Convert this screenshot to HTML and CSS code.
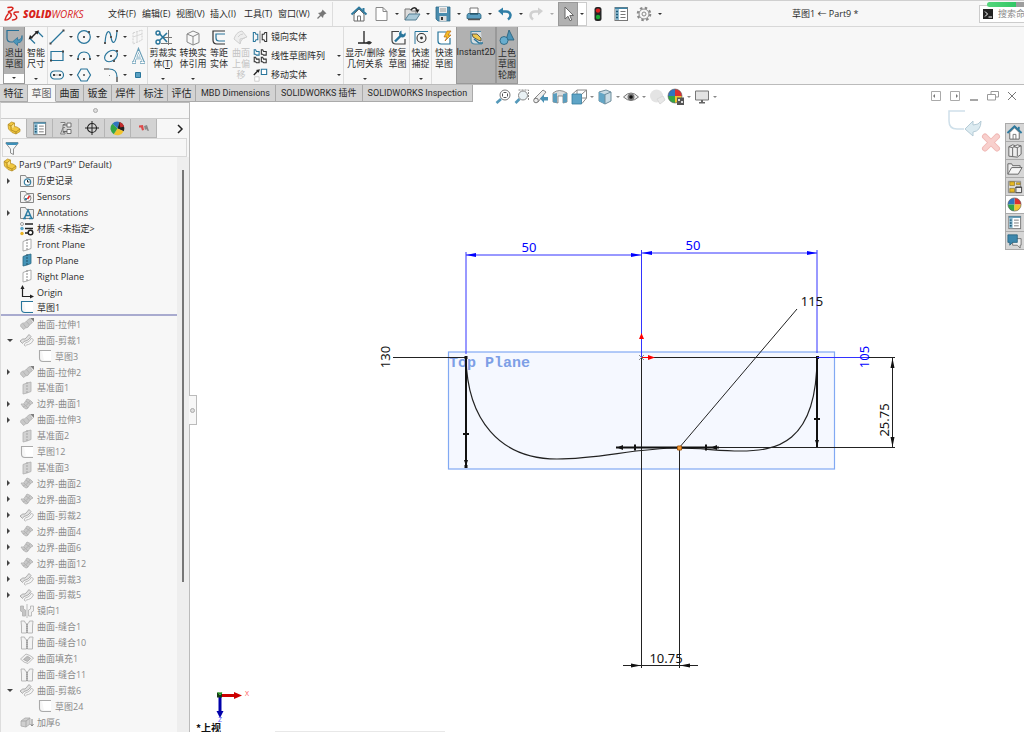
FILE: index.html
```html
<!DOCTYPE html>
<html lang="zh-CN">
<head>
<meta charset="utf-8">
<title>草图1 ← Part9 *</title>
<link rel="stylesheet" href="styles.css">
</head>
<body>
<svg class="sprite" aria-hidden="true">
  <symbol id="home" viewBox="0 0 18 18"><path d="M4 9v7h10V9L9 4z" fill="#fff" stroke="#666"/><path d="M7.500 16v-5h3v5" fill="none" stroke="#777"/><path d="M1.500 9.500 9 2.500l7.500 7" fill="none" stroke="#2f7a9e" stroke-width="2"/><path d="M13.500 3v3" stroke="#2f7a9e" stroke-width="2"/></symbol>
  <symbol id="new" viewBox="0 0 18 18"><path d="M4 2.500h7l4 4v9H4z" fill="#fff" stroke="#888"/><path d="M11 2.500v4h4" fill="none" stroke="#888"/></symbol>
  <symbol id="open" viewBox="0 0 18 18"><path d="M2 15V4h5l1.500 2H13v3" fill="#ddd" stroke="#777"/><path d="M2 15l4-6h11l-4 6z" fill="#a9c9d8" stroke="#557f93"/><path d="M8 5c2-3 5-3 6 0" fill="none" stroke="#222" stroke-width="1.500"/><path d="M12 4.500h4.500L14.500 8z" fill="#222"/></symbol>
  <symbol id="save" viewBox="0 0 18 18"><path d="M2 2h14v14H4l-2-2z" fill="#4a8cae" stroke="#2f6a88" stroke-width=".8"/><path d="M5 2h8v6H5z" fill="#eee"/><path d="M6 4h6M6 6h6" stroke="#999"/><path d="M5.500 11h7v5h-7z" fill="#ddd"/><path d="M7 12h2v3H7z" fill="#333"/></symbol>
  <symbol id="print" viewBox="0 0 18 18"><path d="M5 3h8v6H5z" fill="#fff" stroke="#777"/><path d="M3 8.500h12l1 1.500v3.500H2V10z" fill="#5b9ec1" stroke="#2c647f" stroke-width=".8"/><path d="M3 14.500h12" stroke="#555" stroke-width="1.500"/><path d="M5 9h8" stroke="#123a4d"/></symbol>
  <symbol id="undo" viewBox="0 0 18 18"><path d="M5 6.500h5c5 0 6 5 2 8" fill="none" stroke="currentColor" stroke-width="2.500"/><path d="M7 2.500v8L2 6z" fill="currentColor"/></symbol>
  <symbol id="cursor" viewBox="0 0 18 18"><path d="M6 2v12l3-2.700 2 4.500 1.800-.8-2-4.500h3.700z" fill="#fff" stroke="#666"/></symbol>
  <symbol id="traffic" viewBox="0 0 18 18"><rect x="5.500" y="2" width="7" height="14" rx="2.500" fill="#262626"/><circle cx="9" cy="5.600" r="2.200" fill="#df2121"/><circle cx="9" cy="12" r="2.200" fill="#1bac35"/></symbol>
  <symbol id="list" viewBox="0 0 18 18"><rect x="3" y="2.500" width="12.500" height="13" fill="#fff" stroke="#777"/><path d="M3 2.500h12.500V4H3z" fill="#3f86a8"/><path d="M3.500 4H7v11H3.500z" fill="#8dbbd0"/><path d="M4 6.500h2M4 9.500h2M4 12.500h2" stroke="#1d5a7a" stroke-width="1.500"/><path d="M8.500 6.500h5M8.500 9.500h5M8.500 12.500h5" stroke="#777"/></symbol>
  <symbol id="gear" viewBox="0 0 18 18"><circle cx="9" cy="9" r="6.300" fill="none" stroke="#888" stroke-width="2" stroke-dasharray="2.500 2.450"/><circle cx="9" cy="9" r="5" fill="#f7f7f7" stroke="#888"/><circle cx="9" cy="9" r="2" fill="none" stroke="#888"/></symbol>
  <symbol id="pin" viewBox="0 0 12 12"><path d="M6.500 1.500 10.500 5.500 9 6 7.500 7.500 7 10 2 5l2.500-.5L6 3z" fill="#777"/><path d="M1.500 10.500 5 7" stroke="#777" stroke-width="1.200"/></symbol>

  <symbol id="exit" viewBox="0 0 18 18"><path d="M14 1.500H2V9q0 4 4 4h2" fill="none" stroke="#276f96" stroke-width="1.200"/><path d="M8 12.500l4.500-4v2.500q4 0 4.500-4.500 1.500 7-4.500 7.500v2.500z" fill="#4d96ba" stroke="#276f96" stroke-width=".7"/></symbol>
  <symbol id="smartdim" viewBox="0 0 18 18"><path d="M11 3l5 5M3 9.500l5 5" fill="none" stroke="#28759b" stroke-width="1.200"/><path d="M4 9 10 3" stroke="#222" stroke-width="1.500"/><path d="M1.500 10.500 3 6 6 9zM12 1.500 7.500 2.500 10.500 5.500z" fill="#222"/></symbol>
  <symbol id="line" viewBox="0 0 18 18"><path d="M3 15 15 3" stroke="#28759b" stroke-width="1.200"/><path d="M1.500 14.500h2v2h-2zM14.500 1.500h2v2h-2z" fill="#444"/></symbol>
  <symbol id="circle" viewBox="0 0 18 18"><circle cx="9" cy="9" r="6.300" fill="none" stroke="#28759b" stroke-width="1.200"/><path d="M8 8h2v2H8zM13 3h2v2h-2z" fill="#555"/></symbol>
  <symbol id="spline" viewBox="0 0 18 18"><path d="M3 15C4 1 8 1 9 9s5 8 6-6" fill="none" stroke="#28759b" stroke-width="1.200"/><path d="M2 14h2v2H2zM8 8h2v2H8zM14 2h2v2h-2z" fill="#555"/></symbol>
  <symbol id="ghostplane" viewBox="0 0 18 18"><path d="M4 5l9-3v10l-9 4z" fill="none" stroke="#d0d0d0" stroke-dasharray="2 1"/><path d="M8 3v12M4 9l9-3" stroke="#d8d8d8"/></symbol>
  <symbol id="rect" viewBox="0 0 18 18"><path d="M3 4.500h12v9H3z" fill="none" stroke="#28759b" stroke-width="1.200"/><path d="M2 12.500h2v2H2zM14 3.500h2v2h-2z" fill="#444"/></symbol>
  <symbol id="arc" viewBox="0 0 18 18"><path d="M3 12q0-7 6-7t6 7" fill="none" stroke="#28759b" stroke-width="1.200"/><path d="M2 11h2v2H2zM14 11h2v2h-2zM8 11h2v2H8z" fill="#555"/></symbol>
  <symbol id="ellipse" viewBox="0 0 18 18"><ellipse cx="9" cy="9" rx="7" ry="5" transform="rotate(-35 9 9)" fill="none" stroke="#28759b" stroke-width="1.200"/><path d="M8 8h2v2H8zM14 3h2v2h-2zM11 13h2v2h-2z" fill="#555"/></symbol>
  <symbol id="texticon" viewBox="0 0 18 18"><path d="M3 15.500h4M11 15.500h5M5 15 9.500 3l5 12M6.500 11h6" fill="none" stroke="#6b9fb8" stroke-width="2.400"/><path d="M3.500 15.500h3M11.500 15.500h4M5 15 9.500 4l4.500 11M6.500 11h6" fill="none" stroke="#fff"/></symbol>
  <symbol id="slot" viewBox="0 0 18 18"><rect x="2.500" y="5" width="13" height="8" rx="4" fill="none" stroke="#28759b" stroke-width="1.200"/><path d="M5 8h2v2H5zM11 8h2v2h-2z" fill="#444"/><path d="M7 9h4" stroke="#aaa"/></symbol>
  <symbol id="hexagon" viewBox="0 0 18 18"><path d="M2.500 9 6 3h6l3.500 6L12 15H6z" fill="none" stroke="#28759b" stroke-width="1.200"/><path d="M8 8h2v2H8z" fill="#777"/></symbol>
  <symbol id="fillet" viewBox="0 0 18 18"><path d="M7 3q8 0 8 8" fill="none" stroke="#28759b" stroke-width="1.200"/><path d="M2 3h5M15 11v5" stroke="#333" stroke-width="1.200"/><path d="M7 9h1v1H7z" fill="#888"/></symbol>
  <symbol id="point" viewBox="0 0 18 18"><path d="M6.500 6.500h5v5h-5z" fill="#5aa0c2" stroke="#28759b"/></symbol>
  <symbol id="trim" viewBox="0 0 18 18"><path d="M14.500 1v15M9 8.500h9M7 14.500h11" stroke="#777"/><path d="M5 4l8 9M5 12l8-8" stroke="#28759b" stroke-width="1.600"/><circle cx="4" cy="4" r="2" fill="none" stroke="#28759b" stroke-width="1.400"/><circle cx="4" cy="13" r="2" fill="none" stroke="#28759b" stroke-width="1.400"/></symbol>
  <symbol id="convert" viewBox="0 0 18 18"><path d="M3 5l6-3 6 2.500v9L9 16l-6-3z" fill="#f8f8f8" stroke="#888"/><path d="M3 5l6 2.500 6-3M9 7.500V16" fill="none" stroke="#888"/></symbol>
  <symbol id="offset" viewBox="0 0 18 18"><path d="M15 2H3v9q0 4 4 4h8" fill="none" stroke="#333" stroke-width="1.200"/><path d="M15 5H6v4q0 3 3 3h6" fill="none" stroke="#28759b" stroke-width="1.200"/></symbol>
  <symbol id="surfoffset" viewBox="0 0 18 18"><path d="M2 10q2-7 8-8l5 6q-6 1-7 7z" fill="#eee" stroke="#d0d0d0"/><path d="M6 8q2-3 5-3M8 15v-5l5-1" fill="none" stroke="#d0d0d0"/></symbol>
  <symbol id="mirror" viewBox="0 0 18 18"><path d="M9 2v14" stroke="#777"/><path d="M1.500 4h2l1 2h2v6h-2l-1 2h-2z" fill="none" stroke="#28759b" stroke-width="1.200"/><path d="M16.500 4h-2l-1 2h-2v6h2l1 2h2z" fill="none" stroke="#333" stroke-width="1.200"/></symbol>
  <symbol id="pattern" viewBox="0 0 18 18"><g fill="none" stroke="#333" stroke-width="1.200"><path d="M10.500 2h1.500l1 2h3v4h-3l-1-1h-1.500zM2.500 10.500H4l1 2h3v4H5l-1-1H2.500zM10.500 10.500H12l1 2h3v4h-3l-1-1h-1.500z"/></g><path d="M2.500 2H4l1 2h3v4H5L4 7H2.500z" fill="none" stroke="#28759b" stroke-width="1.200"/></symbol>
  <symbol id="move" viewBox="0 0 18 18"><path d="M10.500 2.500h6v6h-6z" fill="#fff" stroke="#28759b" stroke-width="1.200"/><path d="M3 11h5v5H3z" fill="#fff" stroke="#ccc"/><path d="M2 9 7 4" stroke="#222" stroke-width="1.500"/><path d="M9 2.500 4.500 3.500 7.500 6.500z" fill="#222"/></symbol>
  <symbol id="relations" viewBox="0 0 18 18"><path d="M8 2v12M2 14h10" stroke="#222" stroke-width="1.300"/><path d="M10 13.500q3-3 6 0-3 4-6 0" fill="#333"/></symbol>
  <symbol id="repair" viewBox="0 0 18 18"><path d="M10 2.500H3V11q0 4 4 4h9V10" fill="none" stroke="#444" stroke-width="1.200"/><path d="M6 12.500l6-6" stroke="#28759b" stroke-width="2.400"/><path d="M12.500 1.500v3l2 1 2-2q1 4-2.500 5-4 0-4-4 .5-2.500 2.500-3z" fill="#28759b"/></symbol>
  <symbol id="snap" viewBox="0 0 18 18"><path d="M16 2.500H3V15" fill="none" stroke="#28759b"/><circle cx="9.500" cy="9" r="4.500" fill="none" stroke="#333" stroke-width="1.100"/><circle cx="9.500" cy="9" r="1.400" fill="#333"/></symbol>
  <symbol id="rapid" viewBox="0 0 18 18"><path d="M11 3H3v9q0 3 3 3h9V9" fill="#fff" stroke="#28759b" stroke-width="1.200"/><path d="M16 2h-4L9 8h3l-2 4 6-6h-3z" fill="#f6bd26" stroke="#b26818" stroke-width=".7"/></symbol>
  <symbol id="instant" viewBox="0 0 18 18"><path d="M14 2.500H4V11q0 4 4 4h7" fill="#d5dcdf" stroke="#4c8aa8" stroke-width="1.200"/><path d="M5 5h5l4 4v3l-3-1-5-3z" fill="#edc84f" stroke="#444" stroke-width=".8"/><path d="M7 10l5 4h4" stroke="#28759b" stroke-width="1.500" fill="none"/></symbol>
  <symbol id="shaded" viewBox="0 0 18 18"><path d="M11 1l5 10H8z" fill="#4c94b7" stroke="#235d79" stroke-width=".8"/><circle cx="6" cy="11.500" r="4" fill="#68adce" stroke="#235d79" stroke-width=".8"/></symbol>

  <symbol id="zoomfit" viewBox="0 0 18 18"><circle cx="11" cy="7" r="5" fill="#fff" stroke="#777"/><path d="M2.500 15 7 11" stroke="#5498b9" stroke-width="2.600"/><path d="M9.500 4.500h3M9.500 9.500h3M8.500 5.500v3M13.500 5.500v3" stroke="#555"/></symbol>
  <symbol id="zoomarea" viewBox="0 0 18 18"><path d="M5.500 2h10v10" fill="none" stroke="#888" stroke-dasharray="2 1"/><circle cx="10" cy="7.500" r="4.500" fill="#eaf2f5" stroke="#888"/><path d="M2.500 15 6.500 11" stroke="#5498b9" stroke-width="2.600"/></symbol>
  <symbol id="prevview" viewBox="0 0 18 18"><path d="M2 11 11 2l3 2-8 10z" fill="#eee" stroke="#888"/><path d="M8 10.500l4-4V9h4v3.500h-4V15z" fill="#4b92b5"/><circle cx="4" cy="12.500" r="2.300" fill="#eee" stroke="#777"/></symbol>
  <symbol id="section" viewBox="0 0 18 18"><path d="M2 5q6-5 14 0v9l-4 1V8H7v7l-5-1z" fill="#ddd" stroke="#777" stroke-width=".8"/><path d="M2 6l4-1v10l-4-1zM12 6l4-1v9l-4 1z" fill="#5b9dbd"/></symbol>
  <symbol id="orient" viewBox="0 0 18 18"><path d="M2.500 6 7 2h9.500v8L12 15.500M12 6l4.500-4M7 2v4M12 10h4.500" fill="#fff" stroke="#888"/><path d="M2 6h9.500v10H2z" fill="#5ea4c6" stroke="#367b9d" stroke-width=".8"/></symbol>
  <symbol id="display" viewBox="0 0 18 18"><path d="M3 4l7-2 5 2v9l-6 3-6-3z" fill="#c8dbe4" stroke="#6f8e9d"/><path d="M3 4l6 2.500V16l-6-3z" fill="#63a6c6"/><path d="M9 6.500 15 4M9 6v10" fill="none" stroke="#6f8e9d"/></symbol>
  <symbol id="eye" viewBox="0 0 18 18"><path d="M1.500 9q7.500-8 15 0-7.500 7-15 0z" fill="#eee" stroke="#777"/><circle cx="9" cy="9" r="3.500" fill="#777"/><circle cx="9" cy="9" r="1.800" fill="#111"/></symbol>
  <symbol id="ghostball" viewBox="0 0 18 18"><circle cx="8.500" cy="8" r="6.500" fill="#e4e4e4"/><path d="M9 11l6-3 2 4-5 4z" fill="#e8e8e8" stroke="#d8d8d8"/></symbol>
  <symbol id="ball" viewBox="0 0 18 18"><path d="M9 9V2A7 7 0 0 1 16 9z" fill="#da3030"/><path d="M9 9V2A7 7 0 0 0 2 9z" fill="#2f75c0"/><path d="M9 9H2A7 7 0 0 0 9 16z" fill="#33a546"/><path d="M9 9h7A7 7 0 0 1 9 16z" fill="#f0c32d"/><circle cx="9" cy="9" r="7" fill="none" stroke="#555" stroke-width=".6"/></symbol>
  <symbol id="darkball" viewBox="0 0 18 18"><path d="M9 9 3.500 4A7.300 7.300 0 0 1 11 2z" fill="#2f75c0"/><path d="M9 9 11 2a7.200 7.200 0 0 1 4.500 10z" fill="#222"/><path d="M11 2q4 1 5 5l-4 1z" fill="#c62c2c"/><path d="M9 9l6.500 3A7.200 7.200 0 0 1 5 15z" fill="#f0c32d"/><path d="M9 9l-4 6A7.200 7.200 0 0 1 3.500 4z" fill="#33a546"/></symbol>
  <symbol id="scene" viewBox="0 0 18 18"><use href="#ball" x="-1" y="-1" width="18" height="18"/><path d="M10 9.500h7V17h-7z" fill="#555"/><path d="M11 11h2v2h-2zM14 13h2v2h-2z" fill="#ddd"/></symbol>
  <symbol id="monitor" viewBox="0 0 18 18"><path d="M2.500 3h13v9h-13z" fill="#e3e3e3" stroke="#777"/><path d="M8 12h2v2.500H8zM6 14h6v1.500H6z" fill="#666"/></symbol>

  <symbol id="part" viewBox="0 0 14 14"><path d="M1 3.500 4.500 1l3 1v3.500L10 6l3 2v2.500L9 13l-4-1.500L1.500 8z" fill="#f2c83f" stroke="#b38a20" stroke-width=".7"/><path d="M1 3.500 4 5l3.500-3M4 5v4l5 2 4-3M9 11v2" fill="none" stroke="#a17b1b" stroke-width=".7"/><path d="M4.500 5 7 3v3L5.500 7.500z" fill="#f9e28b"/></symbol>
  <symbol id="config" viewBox="0 0 14 14"><path d="M1.500 1.500H6v2H4v3h2M4 6.500v5h2v1.500H1.500z" fill="#e5e5e5" stroke="#777" stroke-width=".9"/><path d="M8 2h4v4H8zM8 8.500h4v4H8z" fill="#f4f4f4" stroke="#666" stroke-width=".9"/><path d="M4 4h4M4 10.500h4" stroke="#666"/></symbol>
  <symbol id="target" viewBox="0 0 14 14"><circle cx="7" cy="7" r="4.500" fill="none" stroke="#222" stroke-width="1.100"/><path d="M7 0v14M0 7h14" stroke="#222"/></symbol>
  <symbol id="cam" viewBox="0 0 14 14"><path d="M2 4.500 6 4l1 5-2 .5-1-3H2z" fill="#dd4a4a"/><path d="M7 5l3-1 2 6-2-.5-.5-1.500L8 9z" fill="#888"/></symbol>
  <symbol id="filter" viewBox="0 0 14 14"><path d="M1 1.500h12v1L8.500 8v5.500l-3-1.500V8L1 2.500z" fill="#f4f7f8" stroke="#777" stroke-width=".8"/><path d="M1 1.500h12v1L11.500 4h-9L1 2.500z" fill="#3c8fb8"/></symbol>
  <symbol id="history" viewBox="0 0 14 14"><path d="M.5 12.500v-11h5l1 2h7v9z" fill="#f2f2f2" stroke="#888"/><circle cx="7.500" cy="8" r="3.200" fill="#fff" stroke="#3a81a3" stroke-width="1.200"/><path d="M7.500 6v2h2" fill="none" stroke="#222"/></symbol>
  <symbol id="sensor" viewBox="0 0 14 14"><path d="M.5 12.500v-11h5l1 2h7v9z" fill="#f2f2f2" stroke="#888"/><circle cx="7.500" cy="8" r="3.500" fill="#fff" stroke="#888"/><path d="M7.500 9l2-3" stroke="#d22" stroke-width="1.500"/><path d="M5 8h2v2H5z" fill="#3a81a3"/></symbol>
  <symbol id="annot" viewBox="0 0 14 14"><path d="M.5 12.500v-11h5l1 2h7v9z" fill="#eee" stroke="#888"/><path d="M3 12.500h3M9 12.500h4M4.500 12 8 4l3.500 8M6 9.500h4" fill="none" stroke="#2b7ba1" stroke-width="1.500"/></symbol>
  <symbol id="material" viewBox="0 0 14 14"><circle cx="2" cy="2" r="1.500" fill="#fff" stroke="#777" stroke-width=".7"/><circle cx="2" cy="6.500" r="1.700" fill="#58a4c7"/><circle cx="2" cy="11.500" r="1.700" fill="#e9b321"/><path d="M5 2h8M5 6.500h8M5 11h3" stroke="#222" stroke-width="1.300"/><circle cx="10.500" cy="10.500" r="2.300" fill="#fff" stroke="#222" stroke-width="1.500"/></symbol>
  <symbol id="plane" viewBox="0 0 14 14"><path d="M3 3.500l4-1.500 4-1v9.500L7 12l-4 1z" fill="#fff" stroke="#999" stroke-width=".8"/><path d="M7 1v12" stroke="#888" stroke-dasharray="2 1"/></symbol>
  <symbol id="planeblue" viewBox="0 0 14 14"><path d="M3 3.500l4-1.500 4-1v9.500L7 12l-4 1z" fill="#4594b8" stroke="#2a6783" stroke-width=".8"/><path d="M7 1v12" stroke="#225269" stroke-dasharray="2 1"/></symbol>
  <symbol id="planegray" viewBox="0 0 14 14"><path d="M3 3.500l4-1.500 4-1v9.500L7 12l-4 1z" fill="#d2d2d2" stroke="#b0b0b0" stroke-width=".8"/><path d="M7 1v12" stroke="#a5a5a5" stroke-dasharray="2 1"/></symbol>
  <symbol id="origin" viewBox="0 0 14 14"><path d="M2.500 2v9.500H12" fill="none" stroke="#222" stroke-width="1.200"/><path d="M.5 4l2-4 2 4zM10 9.500l4 2-4 2z" fill="#222"/></symbol>
  <symbol id="sketch" viewBox="0 0 14 14"><path d="M4 2h9v9H6z" fill="#fff"/><path d="M13 1.500H1.500V9q0 3.500 3.500 3.500h8" fill="none" stroke="currentColor" stroke-width="1.100"/></symbol>
  <symbol id="extrude" viewBox="0 0 14 14"><path d="M0 8.500l2.500-2.500q2 1 4-2l3-2.500 3 4-3 2.500q-1 3-4 3l-2 1.500z" fill="#c9c9c9" stroke="#b0b0b0" stroke-width=".8"/><path d="M3 6.500l3 4M6.500 4.500l3 3.500" stroke="#b5b5b5"/><path d="M10 1h4v4z" fill="#808080"/></symbol>
  <symbol id="cut" viewBox="0 0 14 14"><path d="M0 8q3-3 5-2 2-2 4-4.500l2 2Q9 7 7 7.500 3 8 2.500 10.500z" fill="#e0e0e0" stroke="#a5a5a5" stroke-width=".9"/><path d="M4 12q1-3 4-3 2-1 3.500-4L13.500 7q-2 4-5 4.500-2 0-3 1.500z" fill="#f5f5f5" stroke="#b5b5b5" stroke-width=".9"/></symbol>
  <symbol id="boundary" viewBox="0 0 14 14"><path d="M1 7q3 1 4-2l2-3q4 1 6 4-3 1-4 3.500-1 2.500-3 2.500-3-1-5-5z" fill="#c9c9c9" stroke="#b0b0b0" stroke-width=".8"/><path d="M4 7l4 4M6 4l5 4M3 10q4-1 7-6" fill="none" stroke="#b3b3b3"/></symbol>
  <symbol id="mirrorgray" viewBox="0 0 14 14"><path d="M.5 2h3v3l2 1v6h-3V8l-2-1z" fill="#c5c5c5" stroke="#b0b0b0" stroke-width=".8"/><path d="M13.500 2h-3v3l-2 1v6h3V8l2-1z" fill="#f0f0f0" stroke="#b0b0b0" stroke-width=".8"/><path d="M7 0v14" stroke="#bbb"/></symbol>
  <symbol id="knit" viewBox="0 0 14 14"><path d="M1 1h3.500q0 2 2 2.500V13H1.500V6zM13 1H9.500q0 2-2 2.500V13h5V6z" fill="#f3f3f3" stroke="#b0b0b0" stroke-width=".9"/><path d="M7 4v9" stroke="#999" stroke-width="1.500" stroke-dasharray="1 1"/></symbol>
  <symbol id="fill" viewBox="0 0 14 14"><path d="M.5 7 6 2q4 1 7.500 4L8 11.500Q4 11 .5 7z" fill="#f0f0f0" stroke="#b5b5b5" stroke-width=".9"/><path d="M3.500 7.500 7 4.500q2 0 3.500 2l-3 3q-2-1-4-2z" fill="#bdbdbd" stroke="#a5a5a5" stroke-width=".8"/></symbol>
  <symbol id="thicken" viewBox="0 0 14 14"><path d="M1 6l4-3h5v6l-4 3-5-1z" fill="#d0d0d0" stroke="#b0b0b0" stroke-width=".9"/><path d="M1 6h5v6M6 6l4-3" fill="none" stroke="#aaa"/><path d="M12 4v7M10.500 9l1.500 2 1.500-2" fill="none" stroke="#888"/></symbol>

  <symbol id="books" viewBox="0 0 18 18"><path d="M3 5l4-2 3 1 2-1 4 1v9l-4 3-9-1z" fill="#eee" stroke="#666"/><path d="M3 5l4 1v9M7 6l3-2M8 5l4 1v9M12 6l4-2" fill="none" stroke="#666"/></symbol>
  <symbol id="folder" viewBox="0 0 18 18"><path d="M2 15V4h4l1 2h8v2" fill="#eee" stroke="#666"/><path d="M2 15l4-7h11l-4 7z" fill="#f5f5f5" stroke="#666"/></symbol>
  <symbol id="palette" viewBox="0 0 18 18"><path d="M2.500 3.500h13v12h-13z" fill="#ddd" stroke="#888"/><path d="M4 4h5v4H4zM11 5h4v2h-4zM4 11h5v4H4z" fill="#e6b923" stroke="#7a611a" stroke-width=".6"/><path d="M10.500 9.500h6v6h-6z" fill="#eee" stroke="#444"/><path d="M10 10h6" stroke="#444"/></symbol>
  <symbol id="forum" viewBox="0 0 18 18"><path d="M7 7h9v7h-1v3l-3-3H7z" fill="#eee" stroke="#777"/><path d="M2 3h10v8H7l-3 3v-3H2z" fill="#3c87ad" stroke="#255f7c" stroke-width=".8"/></symbol>
  <symbol id="paneleft" viewBox="0 0 12 12"><path d="M1.500 1.500h9v9h-9z" fill="none" stroke="#aaa"/><path d="M5 4v4L3 6z" fill="#777"/></symbol>
  <symbol id="paneright" viewBox="0 0 12 12"><path d="M1.500 1.500h9v9h-9z" fill="none" stroke="#aaa"/><path d="M7 4v4l2-2z" fill="#777"/></symbol>
  <symbol id="minimize" viewBox="0 0 12 12"><path d="M2 10h8" stroke="#888" stroke-width="1.500"/></symbol>
  <symbol id="restore" viewBox="0 0 12 12"><path d="M4 4V1.500h7.500V7H8.500M.5 4.500h8V10h-8z" fill="none" stroke="#999"/></symbol>
  <symbol id="close" viewBox="0 0 12 12"><path d="M2 2l8 8M10 2l-8 8" stroke="#777"/></symbol>
</svg>

<header class="titlebar">
  <div class="brand">
    <svg class="ds" viewBox="0 0 16 16" role="img" aria-label="Dassault Systèmes"><g fill="none" stroke="#d8231c" stroke-width="1.500" stroke-linecap="round" stroke-linejoin="round"><path d="M4 1.500q5-1 5 1Q8 5 4.500 5.500"/><path d="M4.500 6.500Q8 7 7 10.500 5 14 1 14q1-4 3-6"/><path d="M14.500 6q-5-.5-4.500 2 3.500 2.500 2.500 4.500Q11 14 8.500 14"/></g></svg>
    <span class="wordmark"><b>SOLID</b>WORKS</span>
  </div>
  <nav class="menus">
    <button>文件(F)</button><button>编辑(E)</button><button>视图(V)</button><button>插入(I)</button><button>工具(T)</button><button>窗口(W)</button>
  </nav>
  <button class="pin" aria-label="固定"><svg><use href="#pin"/></svg></button>
  <div class="quick">
    <button class="ic home" aria-label="主页"><svg><use href="#home"/></svg></button>
    <button class="ic" aria-label="新建"><svg><use href="#new"/></svg></button><button class="dd" aria-label="更多"></button>
    <button class="ic" aria-label="打开"><svg><use href="#open"/></svg></button><button class="dd" aria-label="更多"></button>
    <button class="ic" aria-label="保存"><svg><use href="#save"/></svg></button><button class="dd" aria-label="更多"></button>
    <button class="ic" aria-label="打印"><svg><use href="#print"/></svg></button><button class="dd" aria-label="更多"></button>
    <button class="ic undo" aria-label="撤销"><svg><use href="#undo"/></svg></button><button class="dd" aria-label="更多"></button>
    <button class="ic redo" aria-label="重做"><svg><use href="#undo"/></svg></button><button class="dd faint" aria-label="更多"></button>
    <button class="ic pick" aria-label="选择"><svg><use href="#cursor"/></svg></button><button class="dd boxed" aria-label="更多"></button>
    <button class="ic light" aria-label="重建"><svg><use href="#traffic"/></svg></button>
    <button class="ic props" aria-label="属性"><svg><use href="#list"/></svg></button>
    <button class="ic" aria-label="选项"><svg><use href="#gear"/></svg></button><button class="dd" aria-label="更多"></button>
  </div>
  <span class="doctitle">草图1 ← Part9 *</span>
  <label class="search"><svg viewBox="0 0 10 10"><path d="M0 0h10v10H0z" fill="#222"/><path d="M2 2.500 4.500 5 2 7.500M5.500 8H9" fill="none" stroke="#fff"/></svg><input type="text" placeholder="搜索命令" aria-label="搜索命令"></label>
  <span class="meter"></span>
</header>

<section class="ribbon">
  <button class="rb w22 on split first"><svg><use href="#exit"/></svg><span>退出<br>草图</span><i class="tri"></i></button>
  <button class="rb w22"><svg><use href="#smartdim"/></svg><span>智能<br>尺寸</span><i class="tri"></i></button>
  <div class="tools">
    <button aria-label="直线"><svg><use href="#line"/></svg></button><button class="dd" aria-label="更多"></button><button aria-label="圆"><svg><use href="#circle"/></svg></button><button class="dd" aria-label="更多"></button><button aria-label="样条曲线"><svg><use href="#spline"/></svg></button><button class="dd" aria-label="更多"></button><button aria-label="基准面"><svg><use href="#ghostplane"/></svg></button>
    <button aria-label="矩形"><svg><use href="#rect"/></svg></button><button class="dd" aria-label="更多"></button><button aria-label="圆弧"><svg><use href="#arc"/></svg></button><button class="dd" aria-label="更多"></button><button aria-label="椭圆"><svg><use href="#ellipse"/></svg></button><button class="dd" aria-label="更多"></button><button aria-label="文字"><svg><use href="#texticon"/></svg></button>
    <button aria-label="槽口"><svg><use href="#slot"/></svg></button><button class="dd" aria-label="更多"></button><button aria-label="多边形"><svg><use href="#hexagon"/></svg></button><span></span><button aria-label="圆角"><svg><use href="#fillet"/></svg></button><button class="dd" aria-label="更多"></button><button aria-label="点"><svg><use href="#point"/></svg></button>
  </div>
  <button class="rb w30"><svg><use href="#trim"/></svg><span>剪裁实<br>体(<u>T</u>)</span><i class="tri"></i></button>
  <button class="rb w30"><svg><use href="#convert"/></svg><span>转换实<br>体引用</span><i class="tri"></i></button>
  <button class="rb w22"><svg><use href="#offset"/></svg><span>等距<br>实体</span></button>
  <button class="rb w22" disabled><svg><use href="#surfoffset"/></svg><span>曲面<br>上偏<br>移</span></button>
  <div class="rows">
    <button><svg><use href="#mirror"/></svg>镜向实体</button><span></span>
    <button><svg><use href="#pattern"/></svg>线性草图阵列</button><button class="dd" aria-label="更多"></button>
    <button><svg><use href="#move"/></svg>移动实体</button><button class="dd" aria-label="更多"></button>
  </div>
  <button class="rb w42"><svg><use href="#relations"/></svg><span>显示/删除<br>几何关系</span><i class="tri"></i></button>
  <button class="rb w23 sep"><svg><use href="#repair"/></svg><span>修复<br>草图</span></button>
  <button class="rb w22 sep"><svg><use href="#snap"/></svg><span>快速<br>捕捉</span><i class="tri"></i></button>
  <button class="rb w23"><svg><use href="#rapid"/></svg><span>快速<br>草图</span></button>
  <button class="rb w40 on latin"><svg><use href="#instant"/></svg><span>Instant2D</span></button>
  <button class="rb w22 on"><svg><use href="#shaded"/></svg><span>上色<br>草图<br>轮廓</span></button>
</section>

<div class="tabrow">
  <nav class="tabs">
    <button>特征</button><button class="active">草图</button><button>曲面</button><button>钣金</button><button>焊件</button><button>标注</button><button>评估</button><button>MBD Dimensions</button><button>SOLIDWORKS 插件</button><button>SOLIDWORKS Inspection</button>
  </nav>
  <div class="view">
    <button class="ic" aria-label="整屏显示"><svg><use href="#zoomfit"/></svg></button>
    <button class="ic" aria-label="局部放大"><svg><use href="#zoomarea"/></svg></button>
    <button class="ic" aria-label="上一视图"><svg><use href="#prevview"/></svg></button>
    <button class="ic" aria-label="剖面视图"><svg><use href="#section"/></svg></button>
    <button class="ic" aria-label="视图定向"><svg><use href="#orient"/></svg></button><button class="dd" aria-label="更多"></button>
    <button class="ic" aria-label="显示样式"><svg><use href="#display"/></svg></button><button class="dd" aria-label="更多"></button>
    <button class="ic" aria-label="隐藏/显示"><svg><use href="#eye"/></svg></button><button class="dd" aria-label="更多"></button>
    <button class="ic" aria-label="编辑外观"><svg><use href="#ghostball"/></svg></button>
    <button class="ic" aria-label="应用布景"><svg><use href="#scene"/></svg></button><button class="dd" aria-label="更多"></button>
    <button class="ic" aria-label="视图设定"><svg><use href="#monitor"/></svg></button><button class="dd" aria-label="更多"></button>
  </div>
  <div class="winctl">
    <button aria-label="左窗格"><svg><use href="#paneleft"/></svg></button><button aria-label="右窗格"><svg><use href="#paneright"/></svg></button><button aria-label="最小化"><svg><use href="#minimize"/></svg></button><button aria-label="还原"><svg><use href="#restore"/></svg></button><button aria-label="关闭"><svg><use href="#close"/></svg></button>
  </div>
</div>

<main class="work">
  <aside class="panel">
    <div class="grip"><i></i></div>
    <nav class="ptabs">
      <button class="active" aria-label="特征树"><svg><use href="#part"/></svg></button><button aria-label="属性"><svg class="big"><use href="#list"/></svg></button><button aria-label="配置"><svg><use href="#config"/></svg></button><button aria-label="尺寸专家"><svg><use href="#target"/></svg></button><button aria-label="外观"><svg class="big"><use href="#darkball"/></svg></button><button aria-label="CAM"><svg><use href="#cam"/></svg></button>
      <button class="more" aria-label="更多"><svg viewBox="0 0 8 10"><path d="M2 1l4 4-4 4" fill="none" stroke="#222" stroke-width="1.500"/></svg></button>
    </nav>
    <label class="filter"><svg><use href="#filter"/></svg><input type="text" aria-label="筛选"></label>
    <div class="treebox">
      <ul class="tree">
        <li class="root"><svg><use href="#part"/></svg>Part9 ("Part9" Default)</li>
        <li class="shut"><svg><use href="#history"/></svg>历史记录</li>
        <li><svg><use href="#sensor"/></svg>Sensors</li>
        <li class="shut"><svg><use href="#annot"/></svg>Annotations</li>
        <li><svg><use href="#material"/></svg>材质 &lt;未指定&gt;</li>
        <li><svg><use href="#plane"/></svg>Front Plane</li>
        <li><svg><use href="#planeblue"/></svg>Top Plane</li>
        <li><svg><use href="#plane"/></svg>Right Plane</li>
        <li><svg><use href="#origin"/></svg>Origin</li>
        <li class="rollback"><svg><use href="#sketch"/></svg>草图1</li>
        <li class="off"><svg><use href="#extrude"/></svg>曲面-拉伸1</li>
        <li class="off openx"><svg><use href="#cut"/></svg>曲面-剪裁1</li>
        <li class="off child"><svg><use href="#sketch"/></svg>草图3</li>
        <li class="off shut"><svg><use href="#extrude"/></svg>曲面-拉伸2</li>
        <li class="off"><svg><use href="#planegray"/></svg>基准面1</li>
        <li class="off shut"><svg><use href="#boundary"/></svg>边界-曲面1</li>
        <li class="off shut"><svg><use href="#extrude"/></svg>曲面-拉伸3</li>
        <li class="off"><svg><use href="#planegray"/></svg>基准面2</li>
        <li class="off"><svg><use href="#sketch"/></svg>草图12</li>
        <li class="off"><svg><use href="#planegray"/></svg>基准面3</li>
        <li class="off shut"><svg><use href="#boundary"/></svg>边界-曲面2</li>
        <li class="off shut"><svg><use href="#boundary"/></svg>边界-曲面3</li>
        <li class="off shut"><svg><use href="#cut"/></svg>曲面-剪裁2</li>
        <li class="off shut"><svg><use href="#boundary"/></svg>边界-曲面4</li>
        <li class="off shut"><svg><use href="#boundary"/></svg>边界-曲面6</li>
        <li class="off shut"><svg><use href="#boundary"/></svg>边界-曲面12</li>
        <li class="off shut"><svg><use href="#cut"/></svg>曲面-剪裁3</li>
        <li class="off shut"><svg><use href="#cut"/></svg>曲面-剪裁5</li>
        <li class="off"><svg><use href="#mirrorgray"/></svg>镜向1</li>
        <li class="off"><svg><use href="#knit"/></svg>曲面-缝合1</li>
        <li class="off"><svg><use href="#knit"/></svg>曲面-缝合10</li>
        <li class="off"><svg><use href="#fill"/></svg>曲面填充1</li>
        <li class="off"><svg><use href="#knit"/></svg>曲面-缝合11</li>
        <li class="off openx"><svg><use href="#cut"/></svg>曲面-剪裁6</li>
        <li class="off child"><svg><use href="#sketch"/></svg>草图24</li>
        <li class="off"><svg><use href="#thicken"/></svg>加厚6</li>
      </ul>
      <div class="track"><i></i></div>
    </div>
  </aside>

  <section class="stage">
    <svg class="drawing" viewBox="190 102 834 630" role="img" aria-label="草图">
      <rect x="448.500" y="352" width="386" height="117" fill="#f5f8ff" stroke="#81a9f3" stroke-width="1.200"/>
      <text class="planename" x="449" y="367">Top Plane</text>
      <g class="ink">
        <path d="M393 357.500h73M641 357.500h176M868 357.500h27M679 447.500h216M641.500 357v311M679.500 447v221M623 665.500h75M892.500 357v91M679 448 797 309"/>
        <path class="curve" d="M466 357C467 420 500 459 557 459C600 459 635 448 679 448C700 448 720 451 740 451C775 451 817 445 817 357"/>
        <path class="thick" d="M466 357v110M817 357v90M616 447.500h103"/>
        <path class="thick" d="M463 434h6M814 419h6M635 444.500v6M706 444.500v6"/>
      </g>
      <path class="solid" d="M464 460h4l-2 6zM815 440h4l-2 6zM617 447.500l6-2.500v5zM711 447.500l6-2.500v5zM641 665.500l-10-2v4zM680 665.500l10-2v4zM892.500 358l-2 10h4zM892.500 447l-2-10h4zM464.500 356h3v3h-3zM464.500 465h3v3h-3zM816 356h3v3h-3z"/>
      <g class="dim">
        <path d="M466 252v102M641.500 250v107M817 250v103M466 255h175M641 253h176M817 357.500h51"/>
        <path class="tip" d="M466 255l10-2v4zM641 255l-10-2v4zM642 253l10-2v4zM817 253l-10-2v4z"/>
      </g>
      <path d="M641.500 333l-2.500 6h5zM655 357.500l-7-2.500v5z" fill="#f00"/><path d="M648 357.500h-7" stroke="#f00"/>
      <path d="M639 355l5 5M644 355l-5 5" stroke="#888"/>
      <path d="M677.500 446h4v4h-4z" fill="#f89b32" stroke="#a55a12"/>
      <g class="num">
        <text class="blue" x="529" y="252">50</text><text class="blue" x="693" y="250">50</text>
        <text x="812" y="306">115</text><text x="666" y="663">10.75</text>
        <text transform="translate(390 357) rotate(-90)">130</text>
        <text class="blue" transform="translate(869 357) rotate(-90)">105</text>
        <text transform="translate(889 420) rotate(-90)">25.75</text>
      </g>
      <path d="M965 111h-16v10q0 8 8 8h7" fill="none" stroke="#cfe0ea" stroke-width="1.500"/>
      <path d="M965 129l8-8v4q6 0 8-4 0 10-8 11v4z" fill="#dcebf1" stroke="#b5cbd6"/>
      <path d="M985 136.500l12 12M997 136.500l-12 12" stroke="#f0b9b6" stroke-width="6" stroke-linecap="round"/><path d="M985 136.500l12 12M997 136.500l-12 12" stroke="#f8d0cd" stroke-width="4" stroke-linecap="round"/>
      <path d="M220 695.500h16" stroke="#c00" stroke-width="3"/><path d="M234 692l8 3.500-8 3.500z" fill="#c00"/>
      <path d="M220 696v17" stroke="#00a" stroke-width="3"/><path d="M216.500 711h7l-3.500 7z" fill="#00a"/>
      <path d="M217 692.500h5v5h-5z" fill="#163b16"/><path d="M218 692l2 3 2-3" stroke="#4d4" fill="none"/>
      <text class="axis" x="245" y="696" fill="#f55">X</text><text class="axis" x="218" y="722" fill="#55f">Z</text>
      <text class="viewname" x="196" y="732">*上视</text>
    </svg>
    <button class="collapse" aria-label="收起"><i></i></button>
    <nav class="taskpane">
      <button aria-label="资源"><svg><use href="#home"/></svg></button><button aria-label="设计库"><svg><use href="#books"/></svg></button><button aria-label="文件"><svg><use href="#folder"/></svg></button><button aria-label="视图调色板"><svg><use href="#palette"/></svg></button><button class="active" aria-label="外观"><svg><use href="#ball"/></svg></button><button aria-label="自定义属性"><svg><use href="#list"/></svg></button><button aria-label="论坛"><svg><use href="#forum"/></svg></button>
    </nav>
    <span class="shade"></span>
  </section>
</main>
</body>
</html>
```
FILE: styles.css
```css
* { box-sizing: border-box; }
body {
  margin: 0;
  height: 100vh;
  display: flex;
  flex-direction: column;
  overflow: hidden;
  background: #fff;
  color: #2a2a2a;
  font: 9px/11px "Open Sans", "Noto Sans CJK SC", sans-serif;
}
button {
  margin: 0;
  padding: 0;
  border: 0;
  background: none;
  color: inherit;
  font: inherit;
  white-space: nowrap;
}
input {
  min-width: 0;
  width: 100%;
  padding: 0;
  border: 0;
  background: none;
  font: inherit;
}
svg { display: block; flex: none; }
.sprite { position: absolute; width: 0; height: 0; }

.ic { width: 18px; height: 18px; flex: none; }
.ic svg { width: 18px; height: 18px; }
.dd { display: flex; align-items: center; justify-content: center; flex: none; }
.dd::after, .tri {
  content: "";
  width: 0;
  height: 0;
  border: 2px solid transparent;
  border-top-color: #333;
  border-bottom: 0;
}
.faint::after { border-top-color: #aaa; }

/* title bar */
.titlebar {
  position: relative;
  display: flex;
  align-items: center;
  flex: none;
  height: 27px;
  border-top: 1px solid #d0d0d0;
  border-bottom: 1px solid #d8d8d8;
  background: #f7f7f7;
}
.brand { display: flex; align-items: center; width: 104px; padding-left: 4px; gap: 3px; }
.ds { width: 16px; height: 16px; }
.wordmark { color: #d8231c; font: italic 10px/14px "Open Sans", sans-serif; }
.wordmark b { font-weight: 800; }
.menus { display: flex; width: 212px; padding-left: 4px; }
.menus button { width: 34px; text-align: left; }
.pin { width: 17px; height: 24px; border-right: 1px solid #ddd; }
.pin svg { width: 12px; height: 12px; }
.quick { display: flex; align-items: center; padding-left: 17px; }
.quick .home { margin-right: 4px; }
.quick .dd { width: 13px; height: 24px; }
.undo { color: #2f7ea6; }
.redo { color: #d0d0d0; }
.redo svg { transform: scaleX(-1); }
.quick .pick { width: 20px; height: 24px; background: #b1b1b1; border: 1px solid #999; }
.quick .boxed { width: 9px; border: 1px solid #ccc; border-left: 0; background: #fff; }
.light { margin-left: 2px; }
.props { margin: 0 5px; }
.doctitle { margin-left: auto; width: 187px; }
.search {
  display: flex;
  align-items: center;
  gap: 5px;
  width: 45px;
  height: 18px;
  padding-left: 3px;
  border: 1px solid #ccc;
  border-right: 0;
  background: #fff;
}
.search svg { width: 10px; height: 10px; }
.search input::placeholder { color: #888; opacity: 1; }
.meter {
  position: absolute;
  top: 1px;
  right: 0;
  width: 37px;
  height: 5px;
  border-radius: 3px 0 0 3px;
  background: linear-gradient(90deg, #55d67c, #31c765 29px, #9d9d9d 29px);
}

/* command ribbon */
.ribbon { display: flex; flex: none; height: 58px; border-bottom: 1px solid #bbb; background: #f7f7f7; }
.rb { display: flex; flex-direction: column; align-items: center; flex: none; padding: 2px 0 4px; }
.rb svg { width: 18px; height: 18px; }
.rb .tri { margin-top: auto; }
.rb:disabled { color: #c4c4c4; }
.first { margin-left: 3px; }
.on { border: 1px solid #999; border-top: 0; background: #b1b1b1; }
.split { background: linear-gradient(#b1b1b1 47px, #fff 47px); }
.latin { font-family: Roboto, sans-serif; }
.sep, .rows { border-right: 1px solid #ddd; }
.w22 { width: 22px; }
.w23 { width: 24px; }
.w30 { width: 30px; }
.w40 { width: 40px; }
.w42 { width: 42px; }
.tools {
  display: grid;
  grid-template-columns: 18px 9px 18px 9px 18px 9px 18px;
  grid-auto-rows: 19px;
  border: 1px solid #ddd;
  border-width: 0 1px;
}
.tools svg { width: 18px; height: 18px; }
.rows { display: grid; grid-template-columns: 83px 8px; grid-auto-rows: 19px; }
.rows button:not(.dd) { display: flex; align-items: center; gap: 3px; }
.rows svg { width: 16px; height: 16px; }

/* tabs and view tools */
.tabrow { display: flex; flex: none; height: 17px; }
.tabs { display: flex; font-family: Roboto, "Noto Sans CJK SC", sans-serif; }
.tabs button { min-width: 28px; padding: 0 5px; border: 1px solid #aaa; border-width: 0 1px 1px 0; background: #d3d3d3; }
.tabs button:nth-child(-n+7) { padding: 0 3px; font-size: 10px; }
.tabs .active { border-bottom-color: #f7f7f7; background: #f7f7f7; color: #666; }
.view { display: flex; gap: 1px; padding: 3px 0 0 21px; }
.view .dd { width: 8px; height: 18px; margin: 0 -1px; }
.view .dd::after { border-top-color: #888; }
.winctl { display: flex; gap: 7px; margin-left: auto; padding: 5px 6px 0 0; }
.winctl svg { width: 12px; height: 12px; }

/* feature tree panel */
.work { display: flex; flex: 1; min-height: 0; }
.panel {
  display: flex;
  flex-direction: column;
  flex: none;
  width: 190px;
  border: 1px solid #bbb;
  border-left-color: #ddd;
  border-bottom: 0;
  background: #f7f7f7;
}
.grip { display: flex; align-items: center; justify-content: center; height: 16px; border-bottom: 1px solid #ccc; }
.grip i, .collapse i { width: 5px; height: 5px; border: 1px solid #aaa; border-radius: 50%; background: #ddd; }
.ptabs { display: flex; height: 19px; }
.ptabs button {
  display: flex;
  align-items: center;
  justify-content: center;
  width: 26px;
  border: 1px solid #b5b5b5;
  border-width: 0 1px 1px 0;
  background: #d3d3d3;
}
.ptabs svg { width: 14px; height: 14px; }
.ptabs .big { width: 17px; height: 17px; }
.ptabs .active { border-bottom-color: #f7f7f7; background: #f7f7f7; }
.ptabs .more { margin-left: auto; width: 18px; border: 0; background: none; }
.ptabs .more svg { width: 8px; height: 10px; }
.filter { display: flex; align-items: center; height: 19px; margin: 0 2px 0 1px; padding-left: 2px; border: 1px solid #d8d8d8; }
.filter svg { width: 14px; height: 14px; }
.treebox { display: flex; flex: 1; min-height: 0; }
.tree { display: flex; flex-direction: column; flex: 1; margin: 0; padding: 0 0 2px; list-style: none; }
.tree li { display: flex; align-items: center; flex: 0 1 16px; gap: 3px; padding-left: 19px; }
.tree .root { padding-left: 2px; gap: 2px; }
.tree svg { width: 14px; height: 14px; color: #28759b; }
.tree .off { color: #8a8a8a; }
.tree .off svg { color: #aaa; }
.tree .child { padding-left: 37px; }
.tree .shut, .tree .openx { padding-left: 6px; }
.shut::before { content: ""; width: 0; margin-right: 7px; border: 3px solid transparent; border-left-color: #444; border-right: 0; }
.openx::before { content: ""; width: 0; margin-right: 4px; border: 3px solid transparent; border-top-color: #444; border-bottom: 0; }
.tree .rollback { border-bottom: 2px solid #a9abcf; }
.track { width: 12px; padding: 13px 0 0 5px; background: #eee; }
.track i { display: block; width: 2px; height: 412px; background: #777; }

/* graphics area */
.stage { position: relative; flex: 1; min-width: 0; }
.drawing { width: 100%; height: 100%; }
.ink path { fill: none; stroke: #222; stroke-width: 1; }
.ink .curve { stroke-width: 1.2; }
.ink .thick { stroke: #111; stroke-width: 2; }
.solid { fill: #111; }
.dim path { fill: none; stroke: #33f; stroke-width: 1; }
.dim .tip { fill: #00f; stroke: none; }
.num text { font: 13px "Noto Sans", sans-serif; text-anchor: middle; fill: #111; }
.num .blue { fill: #00f; }
.planename { font: bold 15px "Liberation Mono", monospace; fill: #7d9fe6; }
.axis { font: 7px "Open Sans", sans-serif; }
.viewname { font: bold 10px "Noto Sans CJK SC", sans-serif; fill: #111; }
.collapse {
  position: absolute;
  top: 293px;
  left: -1px;
  display: flex;
  align-items: center;
  justify-content: center;
  width: 8px;
  height: 30px;
  border: 1px solid #bbb;
  border-left: 0;
  background: #f7f7f7;
}
.taskpane { position: absolute; top: 21px; right: 0; display: flex; flex-direction: column; width: 19px; border: 1px solid #aaa; border-width: 1px 0 0 1px; }
.taskpane button { height: 18px; border-bottom: 1px solid #aaa; background: #d6d6d6; }
.taskpane .active { background: #fff; }
.taskpane svg { width: 17px; height: 17px; }
.shade { position: absolute; bottom: 0; left: 85px; width: 170px; height: 1px; background: #e8e8e8; }
```
